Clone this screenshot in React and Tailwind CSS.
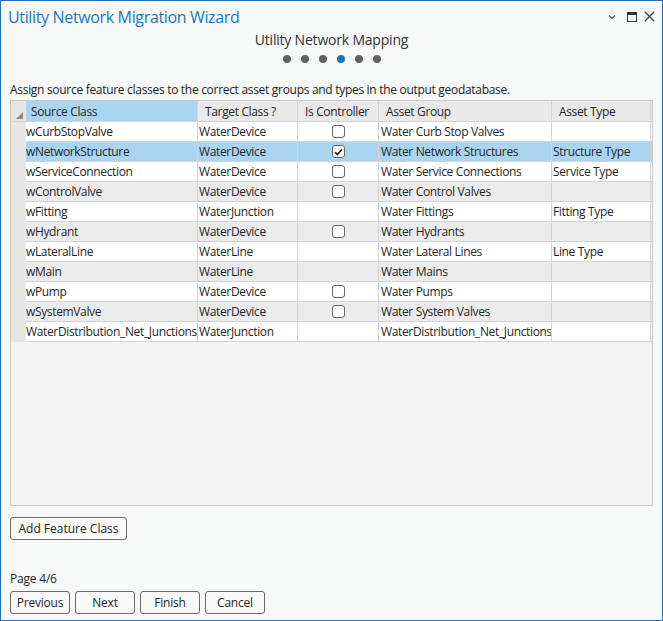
import React from "react";

const rows = [
  ["wCurbStopValve", "WaterDevice", "box", "Water Curb Stop Valves", ""],
  ["wNetworkStructure", "WaterDevice", "checked", "Water Network Structures", "Structure Type"],
  ["wServiceConnection", "WaterDevice", "box", "Water Service Connections", "Service Type"],
  ["wControlValve", "WaterDevice", "box", "Water Control Valves", ""],
  ["wFitting", "WaterJunction", "", "Water Fittings", "Fitting Type"],
  ["wHydrant", "WaterDevice", "box", "Water Hydrants", ""],
  ["wLateralLine", "WaterLine", "", "Water Lateral Lines", "Line Type"],
  ["wMain", "WaterLine", "", "Water Mains", ""],
  ["wPump", "WaterDevice", "box", "Water Pumps", ""],
  ["wSystemValve", "WaterDevice", "box", "Water System Valves", ""],
  ["WaterDistribution_Net_Junctions", "WaterJunction", "", "WaterDistribution_Net_Junctions", ""],
];

const cols = "grid grid-cols-[15px_172px_100px_81px_173px_99px_1px]";

function CheckBox({ checked }) {
  return (
    <div className="w-[13px] h-[13px] rounded-[3px] border border-[#666666] bg-white flex items-center justify-center">
      {checked && (
        <svg width="9" height="8" viewBox="0 0 9 8">
          <path d="M1 4.2 L3.4 6.5 L8 1.3" fill="none" stroke="#262626" strokeWidth="1.6" />
        </svg>
      )}
    </div>
  );
}

function Btn({ children, w }) {
  return (
    <button className={`${w} h-[23px] border border-[#6b6b6b] rounded-[3px] bg-[#f9f9f9] text-[12px] text-[#262626] flex items-center justify-center`}>
      {children}
    </button>
  );
}

export default function App() {
  return (
    <div
      className="w-[663px] h-[621px] bg-[#f7f8f8] border border-[#2770b4] flex flex-col text-[#262626]"
      style={{ fontFamily: '"Open Sans", "Noto Sans", sans-serif' }}
    >
      <div className="h-[31px] flex items-center pl-[7px] pr-[7px]">
        <div className="text-[16px] text-[#1a78c2] tracking-[-0.35px]">Utility Network Migration Wizard</div>
        <div className="ml-auto flex items-center">
          <svg width="10" height="10" viewBox="0 0 10 10">
            <path d="M2 3.5 L5 6.5 L8 3.5" fill="none" stroke="#444" strokeWidth="1.2" />
          </svg>
          <svg width="10" height="10" viewBox="0 0 10 10" className="ml-[10px]">
            <rect x="0.5" y="0.5" width="9" height="9" fill="none" stroke="#333" strokeWidth="1" />
            <rect x="0.5" y="0.5" width="9" height="2.5" fill="#333" />
          </svg>
          <svg width="11" height="11" viewBox="0 0 11 11" className="ml-[7px]">
            <path d="M0.8 0.8 L10.2 10.2 M10.2 0.8 L0.8 10.2" fill="none" stroke="#444" strokeWidth="1.3" />
          </svg>
        </div>
      </div>
      <div className="h-[15px] flex items-center justify-center text-[14px] text-[#333] font-medium tracking-[-0.2px]">
        Utility Network Mapping
      </div>
      <div className="h-[24px] flex items-center justify-center gap-[10px] pl-[1px]">
        {[0, 1, 2, 3, 4, 5].map((i) => (
          <div key={i} className={`w-[8px] h-[8px] rounded-full ${i === 3 ? "bg-[#1b73c2]" : "bg-[#626262]"}`} />
        ))}
      </div>
      <div className="h-[29px] flex items-end pb-[1px] pl-[9px] text-[12px] text-[#222] tracking-[-0.3px]">
        Assign source feature classes to the correct asset groups and types in the output geodatabase.
      </div>
      <div className="mx-[9px] h-[406px] border border-[#c9c9c9] bg-[#f4f4f4] flex flex-col text-[12px] tracking-[-0.35px]">
        <div className={`${cols} h-[21px]`}>
          <div className="bg-[#e6e6e6] border-b border-[#d4d4d4] relative">
            <svg width="7" height="7" viewBox="0 0 7 7" className="absolute left-[5px] bottom-[2px]">
              <path d="M7 0 L7 7 L0 7 Z" fill="#8c8c8c" />
            </svg>
          </div>
          <div className="bg-[#a9d5f3] border-r border-b border-[#d4d4d4] pl-[5px] pt-[2px] flex items-center">Source Class</div>
          <div className="bg-[#e9e9e9] border-r border-b border-[#d4d4d4] pl-[7px] pt-[2px] flex items-center">Target Class ?</div>
          <div className="bg-[#e9e9e9] border-r border-b border-[#d4d4d4] pl-[7px] pt-[2px] flex items-center">Is Controller</div>
          <div className="bg-[#e9e9e9] border-r border-b border-[#d4d4d4] pl-[7px] pt-[2px] flex items-center">Asset Group</div>
          <div className="bg-[#e9e9e9] border-r border-b border-[#d4d4d4] pl-[7px] pt-[2px] flex items-center">Asset Type</div>
          <div className="bg-[#e9e9e9] border-b border-[#d4d4d4]" />
        </div>
        {rows.map((r, i) => {
          const sel = i === 1;
          const bg = sel ? "bg-[#a9d5f3]" : i % 2 === 0 ? "bg-white" : "bg-[#ebebeb]";
          return (
            <div key={i} className={`${cols} h-[20px]`}>
              <div className="bg-[#e6e6e6] border-b border-[#e6e6e6]" />
              <div className={`${bg} border-r border-b border-[#d4d4d4] pl-[0px] flex items-center whitespace-nowrap overflow-hidden`}>{r[0]}</div>
              <div className={`${bg} border-r border-b border-[#d4d4d4] pl-[1px] flex items-center`}>{r[1]}</div>
              <div className={`${bg} border-r border-b border-[#d4d4d4] flex items-center justify-center pl-[1px]`}>
                {r[2] === "box" && <CheckBox />}
                {r[2] === "checked" && <CheckBox checked />}
              </div>
              <div className={`${bg} border-r border-b border-[#d4d4d4] pl-[2px] flex items-center whitespace-nowrap overflow-hidden`}>{r[3]}</div>
              <div className={`${bg} border-r border-b border-[#d4d4d4] pl-[1px] flex items-center`}>{r[4]}</div>
              <div className={`${bg} border-b border-[#d4d4d4]`} />
            </div>
          );
        })}
      </div>
      <div className="pl-[9px] pt-[11px]">
        <Btn w="w-[117px]">Add Feature Class</Btn>
      </div>
      <div className="pl-[9px] mt-[31px] h-[16px] flex items-center text-[12px] tracking-[-0.2px]">Page 4/6</div>
      <div className="pl-[9px] mt-[4px] flex gap-[5px] tracking-[-0.2px]">
        <Btn w="w-[60px]">Previous</Btn>
        <Btn w="w-[60px]">Next</Btn>
        <Btn w="w-[60px]">Finish</Btn>
        <Btn w="w-[60px]">Cancel</Btn>
      </div>
    </div>
  );
}
